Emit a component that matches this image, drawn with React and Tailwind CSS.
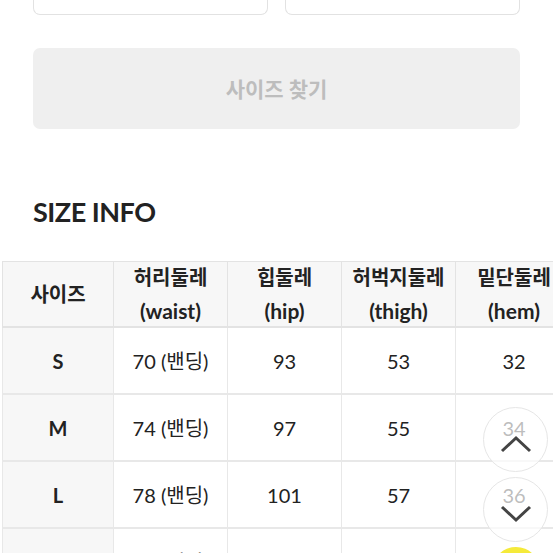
import React from "react";

const font = { fontFamily: 'Lato, "Noto Sans CJK KR", sans-serif' };

const headers = [
  ["사이즈"],
  ["허리둘레", "(waist)"],
  ["힙둘레", "(hip)"],
  ["허벅지둘레", "(thigh)"],
  ["밑단둘레", "(hem)"],
];

const rows = [
  ["S", "70 (밴딩)", "93", "53", "32"],
  ["M", "74 (밴딩)", "97", "55", "34"],
  ["L", "78 (밴딩)", "101", "57", "36"],
  ["XL", "82 (밴딩)", "105", "59", "38"],
];

export default function App() {
  return (
    <div className="relative w-[553px] h-[553px] overflow-hidden bg-white text-[#222]" style={font}>
      <div className="flex gap-[17px] px-[33px]">
        <div className="h-[15px] flex-1 rounded-b-[7px] border border-t-0 border-[#e2e2e2]" />
        <div className="h-[15px] flex-1 rounded-b-[7px] border border-t-0 border-[#e2e2e2]" />
      </div>
      <div className="mx-[33px] mt-[33px] h-[81px] rounded-[7px] bg-[#efefef] flex items-center justify-center">
        <span className="text-[21px] font-bold text-[#bdbdbd]">사이즈 찾기</span>
      </div>
      <div className="px-[33px] mt-[66px] h-[34px] flex items-center">
        <span className="text-[27px] font-bold tracking-[-0.5px] text-[#222]">SIZE INFO</span>
      </div>
      <div className="ml-[2px] mt-[32px] w-[570px]">
        <div className="grid grid-cols-[111px_114px_114px_114px_117px] border-t border-[#e3e3e3]">
          {headers.map((h, i) => (
            <div
              key={i}
              className="h-[66px] bg-[#f7f7f7] border-b-2 border-l border-[#e3e3e3] flex flex-col items-center justify-center text-[20px] leading-[34px] font-bold"
            >
              <span>{h[0]}</span>
              {h[1] && <span className="text-[21px] font-bold">{h[1]}</span>}
            </div>
          ))}
          {rows.map((r, ri) =>
            r.map((c, ci) => (
              <div
                key={ri + "-" + ci}
                className={`h-[67px] border-b-2 border-l border-[#e8e8e8] flex items-center justify-center text-[20px] ${ci === 0 ? "bg-[#f7f7f7] font-bold" : "bg-white"}`}
              >
                {c}
              </div>
            ))
          )}
        </div>
      </div>
      <button className="absolute left-[483px] top-[407px] w-[65px] h-[65px] rounded-full border border-[#e6e6e6] bg-white/70 flex items-center justify-center">
        <svg width="34" height="20" viewBox="0 0 34 20" className="mt-[8px]">
          <path d="M3 17 L17 4 L31 17" fill="none" stroke="#444" strokeWidth="3" />
        </svg>
      </button>
      <button className="absolute left-[483px] top-[477px] w-[65px] h-[65px] rounded-full border border-[#e6e6e6] bg-white/70 flex items-center justify-center">
        <svg width="34" height="20" viewBox="0 0 34 20" className="mt-[8px]">
          <path d="M3 3 L17 16 L31 3" fill="none" stroke="#444" strokeWidth="3" />
        </svg>
      </button>
      <div className="absolute left-[492px] top-[547px] w-[48px] h-[48px] rounded-full bg-[#f5ea3a]" />
    </div>
  );
}
